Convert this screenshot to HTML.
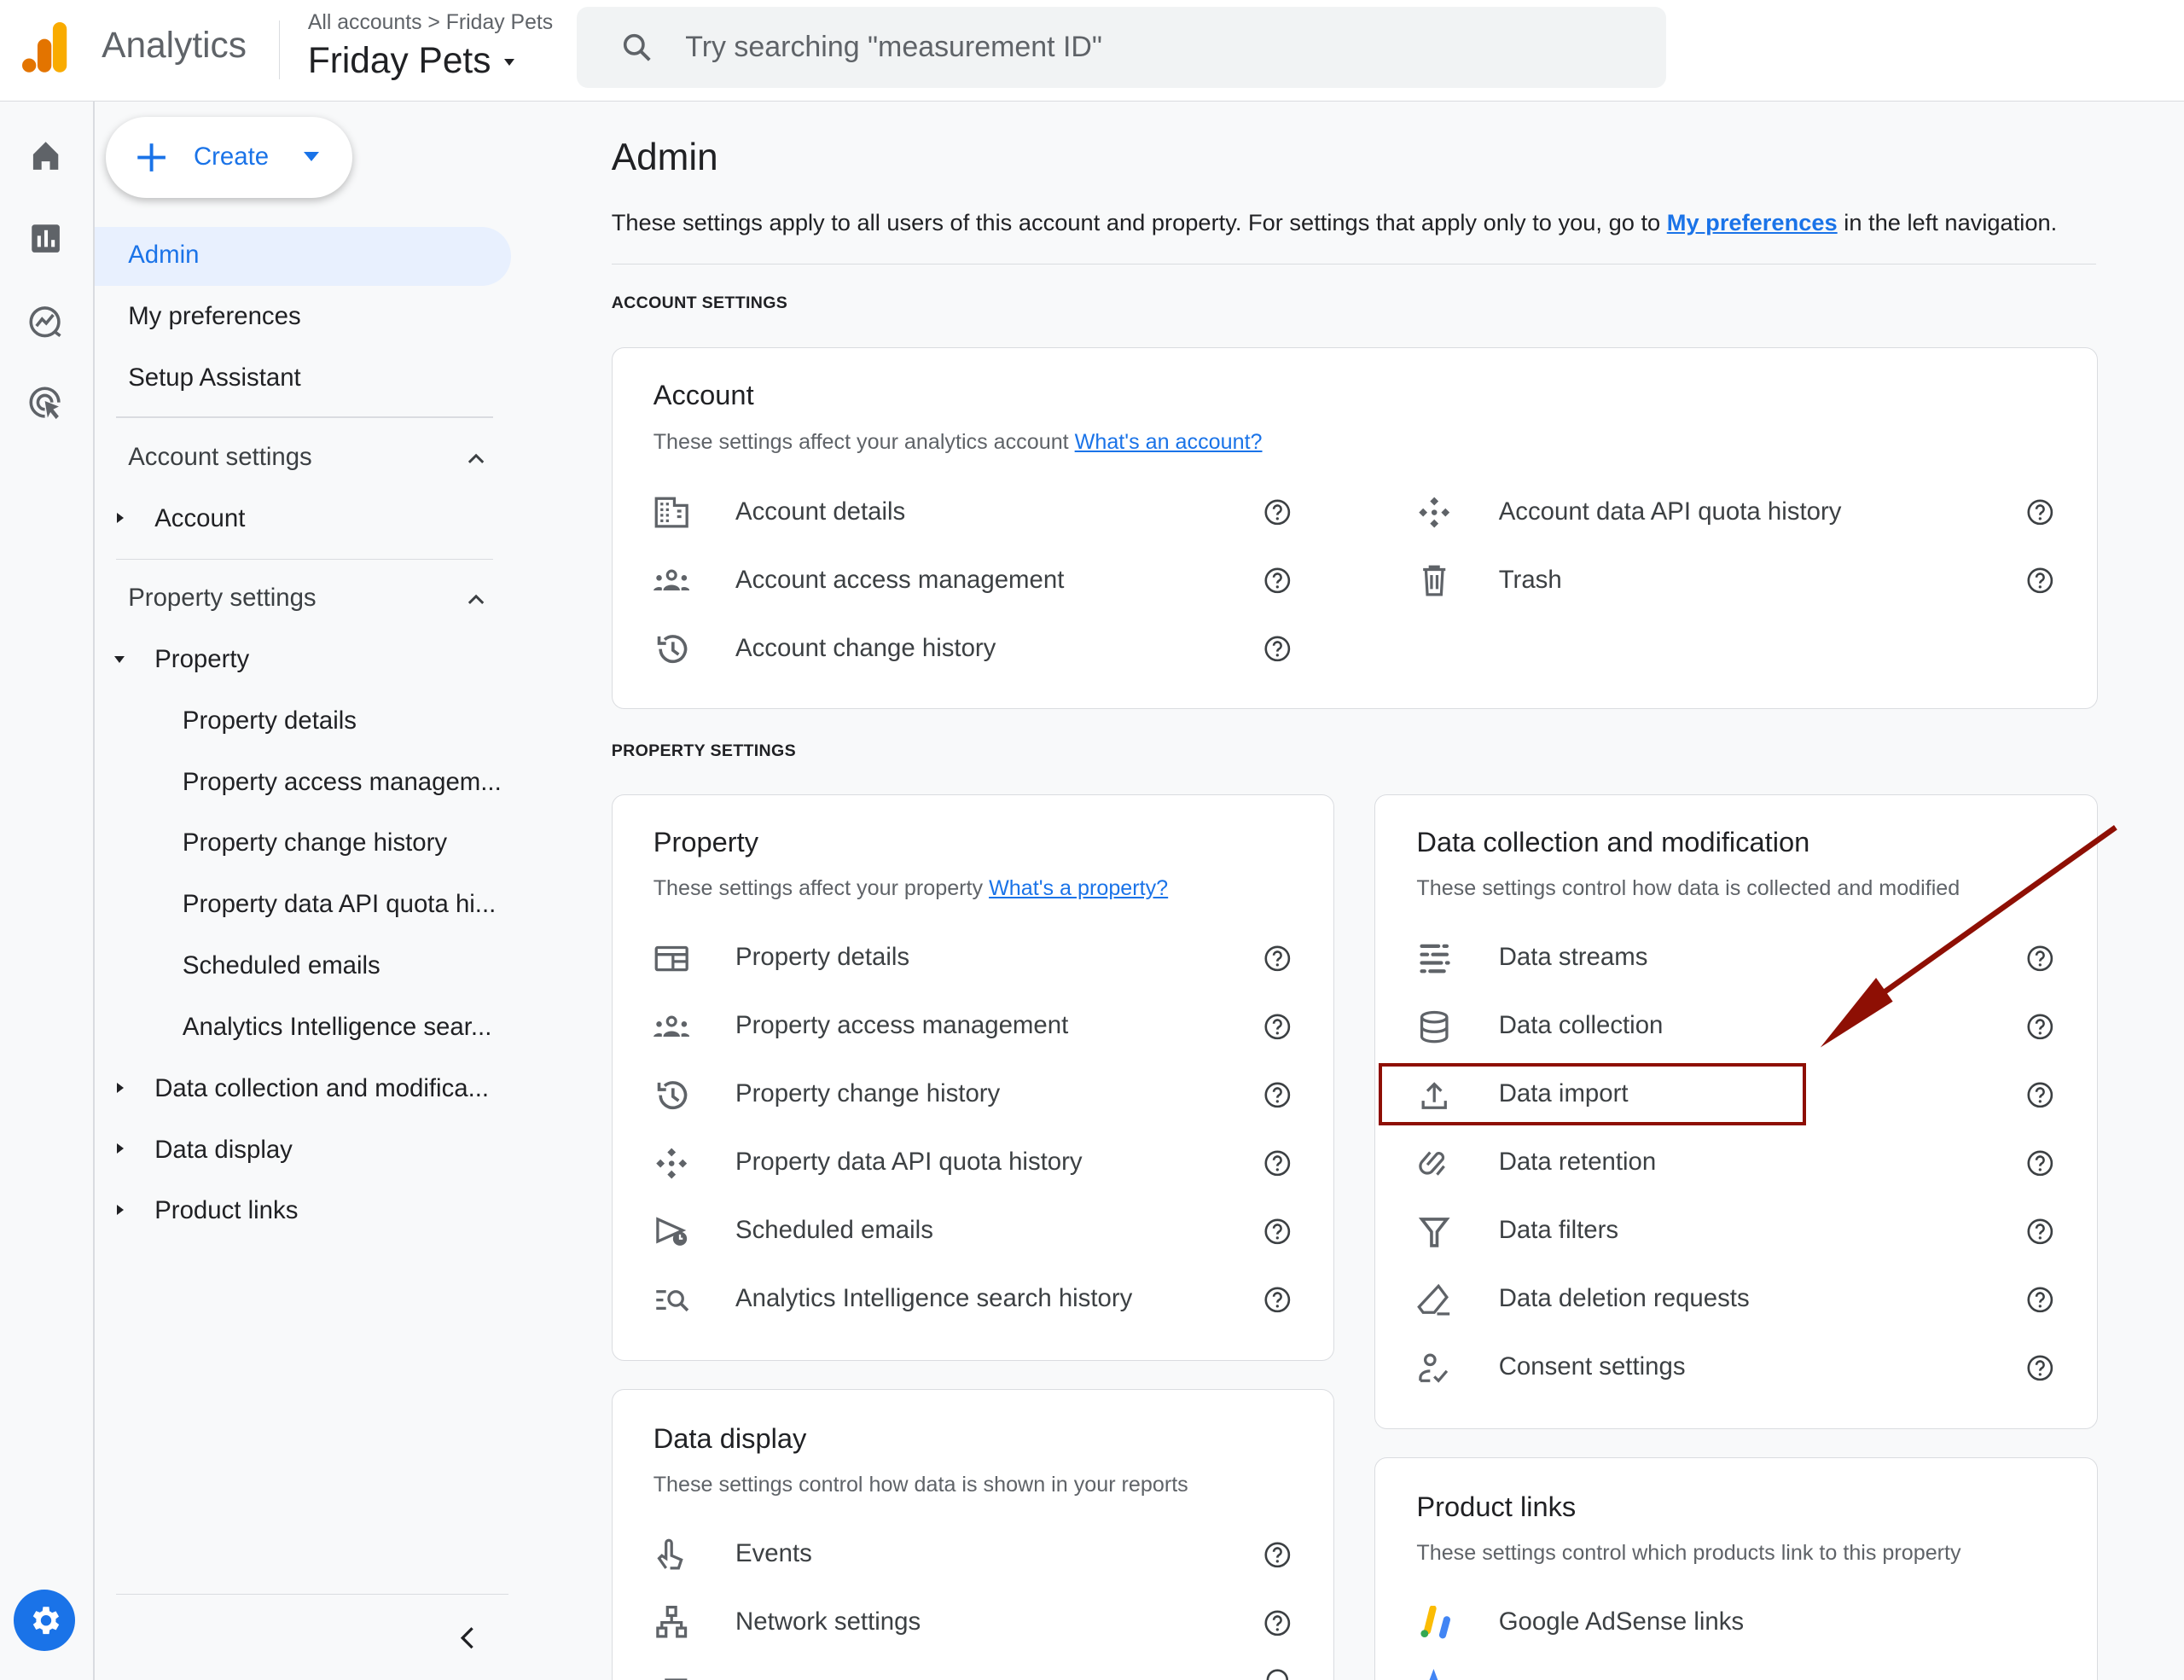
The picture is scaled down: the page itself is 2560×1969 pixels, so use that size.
<!DOCTYPE html>
<html><head><meta charset="utf-8">
<style>
html,body{margin:0;padding:0;overflow:hidden}
body{zoom:1.63265;background:#f8f9fa;font-family:"Liberation Sans",Arial,sans-serif;color:#202124}
#w{position:relative;width:1568px;height:1206px;overflow:hidden;background:#f8f9fa}
.a{position:absolute}
.top{left:0;top:0;width:1568px;height:72px;background:#fff;border-bottom:1px solid #dadce0}
.card{position:absolute;background:#fff;border:1px solid #dadce0;border-radius:9px}
.ct{position:absolute;font-size:20px;color:#202124}
.cs{position:absolute;font-size:15.4px;color:#5f6368;white-space:nowrap}
.cs a{color:#1a73e8;text-decoration:underline}
.r{position:absolute;height:26px;width:460px}
.r svg.i{position:absolute;left:0;top:1px;width:26px;height:24px}
.r span{position:absolute;left:59px;top:2px;font-size:18px;color:#3c4043;white-space:nowrap}
.r svg.h{position:absolute;left:438px;top:3px;width:20px;height:20px}
.nav{position:absolute;font-size:18px;color:#202124;white-space:nowrap}
.sec{position:absolute;font-size:12px;font-weight:bold;color:#202124;letter-spacing:.2px}
.hr{position:absolute;height:1px;background:#dadce0}
.car{position:absolute;width:0;height:0;border-top:4px solid transparent;border-bottom:4px solid transparent;border-left:5px solid #202124}
.card2{position:absolute;width:0;height:0;border-left:4px solid transparent;border-right:4px solid transparent;border-top:5px solid #202124}
</style></head><body><div id="w">
<svg width="0" height="0" style="position:absolute">
<defs>
<g id="help"><circle cx="10" cy="10" r="8.3" fill="none" stroke="#3c4043" stroke-width="1.6"/><path d="M7.4 7.8a2.6 2.6 0 1 1 3.8 2.3c-.8.5-1.2.9-1.2 1.9" fill="none" stroke="#3c4043" stroke-width="1.6"/><circle cx="10" cy="14.6" r="1" fill="#3c4043"/></g>
</defs></svg>

<div class="a top"></div>
<svg class="a" style="left:16px;top:16px" width="34" height="36" viewBox="0 0 34 36"><rect x="22" y="0" width="10" height="36" rx="5" fill="#f9ab00"/><rect x="11" y="12" width="10" height="24" rx="5" fill="#e37400"/><circle cx="5" cy="31" r="5" fill="#e37400"/></svg>
<div class="a" style="left:73px;top:18px;font-size:26px;color:#5f6368">Analytics</div>
<div class="a" style="left:200px;top:15px;width:1px;height:42px;background:#dadce0"></div>
<div class="a" style="left:221px;top:8px;font-size:15.2px;color:#5f6368;white-space:nowrap">All accounts &gt; Friday Pets</div>
<div class="a" style="left:221px;top:29px;font-size:26px;color:#202124">Friday Pets</div>
<div class="card2" style="left:362px;top:42px"></div>
<div class="a" style="left:414px;top:5px;width:782px;height:58px;background:#f1f3f4;border-radius:8px"></div>
<svg class="a" style="left:445px;top:22px" width="24" height="24" viewBox="0 0 24 24"><circle cx="10" cy="10" r="6.5" fill="none" stroke="#5f6368" stroke-width="2.2"/><path d="M15 15l6 6" stroke="#5f6368" stroke-width="2.4"/></svg>
<div class="a" style="left:492px;top:22px;font-size:20.8px;color:#5f6368;white-space:nowrap">Try searching "measurement ID"</div>

<div class="a" style="left:67px;top:73px;width:1px;height:1133px;background:#dadce0"></div>
<svg class="a" style="left:21px;top:100px" width="24" height="24" viewBox="0 0 24 24"><path d="M3 11L12 2l9 9v11h-6v-6H9v6H3z" fill="#5f6368"/></svg>
<svg class="a" style="left:21px;top:159px" width="24" height="24" viewBox="0 0 24 24"><rect x="2" y="2" width="20" height="20" rx="2" fill="#5f6368"/><rect x="6" y="10" width="2.5" height="8" fill="#fff"/><rect x="11" y="6" width="2.5" height="12" fill="#fff"/><rect x="16" y="13" width="2.5" height="5" fill="#fff"/></svg>
<svg class="a" style="left:20px;top:218px" width="26" height="26" viewBox="0 0 26 26"><circle cx="12" cy="13" r="10" fill="none" stroke="#5f6368" stroke-width="2.2"/><path d="M6 16l4-5 3 3 5-6" fill="none" stroke="#5f6368" stroke-width="2.2"/><path d="M19 20l4 3" stroke="#5f6368" stroke-width="2.2"/></svg>
<svg class="a" style="left:20px;top:277px" width="26" height="26" viewBox="0 0 26 26"><path d="M12 22a10 10 0 1 1 10-10" fill="none" stroke="#5f6368" stroke-width="2.2"/><path d="M12 17a5 5 0 1 1 5-5" fill="none" stroke="#5f6368" stroke-width="2.2"/><path d="M12 11l10 4-4 2 4 5-2 2-4-5-2 4z" fill="#5f6368"/></svg>
<div class="a" style="left:10px;top:1141px;width:44px;height:44px;border-radius:50%;background:#1a73e8"></div>
<svg class="a" style="left:19px;top:1150px" width="26" height="26" viewBox="0 0 24 24"><path fill="#fff" d="M19.4 13a7.5 7.5 0 0 0 0-2l2.1-1.6-2-3.5-2.5 1a7 7 0 0 0-1.7-1L15 3h-4l-.4 2.7a7 7 0 0 0-1.7 1l-2.5-1-2 3.5L6.5 11a7.5 7.5 0 0 0 0 2l-2.1 1.6 2 3.5 2.5-1a7 7 0 0 0 1.7 1L11 21h4l.4-2.7a7 7 0 0 0 1.7-1l2.5 1 2-3.5zM13 15.5A3.5 3.5 0 1 1 13 8.5a3.5 3.5 0 0 1 0 7z"/></svg>

<div class="a" style="left:76px;top:84px;width:177px;height:58px;background:#fff;border-radius:29px;box-shadow:0 2px 6px rgba(0,0,0,.25)"></div>
<svg class="a" style="left:97px;top:101px" width="24" height="24" viewBox="0 0 24 24"><path d="M12 2v20M2 12h20" stroke="#1a73e8" stroke-width="2.4"/></svg>
<div class="a" style="left:139px;top:102px;font-size:18px;color:#1a73e8">Create</div>
<div class="card2" style="left:218px;top:109px;border-left-width:6px;border-right-width:6px;border-top:7px solid #1a73e8"></div>
<div class="a" style="left:68px;top:163px;width:299px;height:42px;background:#e8f0fe;border-radius:0 21px 21px 0"></div>
<div class="nav" style="left:92px;top:173px;color:#1a73e8">Admin</div>
<div class="nav" style="left:92px;top:217px">My preferences</div>
<div class="nav" style="left:92px;top:261px">Setup Assistant</div>
<div class="hr" style="left:83px;top:299px;width:271px"></div>
<div class="nav" style="left:92px;top:318px;color:#3c4043">Account settings</div>
<svg class="a" style="left:334px;top:321px" width="16" height="16" viewBox="0 0 16 16"><path d="M3 11l5-5 5 5" fill="none" stroke="#3c4043" stroke-width="1.8"/></svg>
<div class="car" style="left:84px;top:368px"></div>
<div class="nav" style="left:111px;top:362px">Account</div>
<div class="hr" style="left:83px;top:401px;width:271px"></div>
<div class="nav" style="left:92px;top:419px;color:#3c4043">Property settings</div>
<svg class="a" style="left:334px;top:422px" width="16" height="16" viewBox="0 0 16 16"><path d="M3 11l5-5 5 5" fill="none" stroke="#3c4043" stroke-width="1.8"/></svg>
<div class="card2" style="left:82px;top:471px"></div>
<div class="nav" style="left:111px;top:463px">Property</div>
<div class="nav" style="left:131px;top:507px">Property details</div>
<div class="nav" style="left:131px;top:551px">Property access managem...</div>
<div class="nav" style="left:131px;top:595px">Property change history</div>
<div class="nav" style="left:131px;top:639px">Property data API quota hi...</div>
<div class="nav" style="left:131px;top:683px">Scheduled emails</div>
<div class="nav" style="left:131px;top:727px">Analytics Intelligence sear...</div>
<div class="car" style="left:84px;top:777px"></div>
<div class="nav" style="left:111px;top:771px">Data collection and modifica...</div>
<div class="car" style="left:84px;top:821px"></div>
<div class="nav" style="left:111px;top:815px">Data display</div>
<div class="car" style="left:84px;top:865px"></div>
<div class="nav" style="left:111px;top:859px">Product links</div>
<div class="hr" style="left:83px;top:1144px;width:282px"></div>
<svg class="a" style="left:327px;top:1167px" width="18" height="18" viewBox="0 0 18 18"><path d="M12 2L5 9l7 7" fill="none" stroke="#202124" stroke-width="2"/></svg>

<div class="a" style="left:439px;top:98px;font-size:27px">Admin</div>
<div class="a" style="left:439px;top:150px;font-size:16.7px;white-space:nowrap">These settings apply to all users of this account and property. For settings that apply only to you, go to <a style="color:#1a73e8;font-weight:bold;text-decoration:underline">My preferences</a> in the left navigation.</div>
<div class="hr" style="left:439px;top:189px;width:1066px"></div>
<div class="sec" style="left:439px;top:211px">ACCOUNT SETTINGS</div>

<div class="card" style="left:439px;top:249px;width:1066px;height:259px"></div>
<div class="ct" style="left:469px;top:272px">Account</div>
<div class="cs" style="left:469px;top:309px">These settings affect your analytics account <a>What's an account?</a></div>

<div class="r" style="left:469px;top:355px"><svg class="i" viewBox="0 0 26 24"><path d="M2 2h13v5h9v15H2z" fill="none" stroke="#5f6368" stroke-width="2"/><path d="M5 6h2M9 6h2M5 10h2M9 10h2M5 14h2M9 14h2M5 18h2M9 18h2M17 11h3M17 15h3" stroke="#5f6368" stroke-width="2"/></svg><span>Account details</span><svg class="h"><use href="#help"/></svg></div>
<div class="r" style="left:469px;top:404px"><svg class="i" viewBox="0 0 26 24"><circle cx="13" cy="8" r="3" fill="none" stroke="#5f6368" stroke-width="2"/><circle cx="4" cy="10" r="2" fill="#5f6368"/><circle cx="22" cy="10" r="2" fill="#5f6368"/><path d="M7 19a6 4 0 0 1 12 0z" fill="#5f6368"/><path d="M0 19a4 3 0 0 1 6-2v2zM26 19a4 3 0 0 0-6-2v2z" fill="#5f6368"/></svg><span>Account access management</span><svg class="h"><use href="#help"/></svg></div>
<div class="r" style="left:469px;top:453px"><svg class="i" viewBox="0 0 26 24"><path d="M5 12a9 9 0 1 0 3-6.7" fill="none" stroke="#5f6368" stroke-width="2.2"/><path d="M4 3v5h5" fill="none" stroke="#5f6368" stroke-width="2.2"/><path d="M14 7v6l4 3" fill="none" stroke="#5f6368" stroke-width="2.2"/></svg><span>Account change history</span><svg class="h"><use href="#help"/></svg></div>
<div class="r" style="left:1017px;top:355px"><svg class="i" viewBox="0 0 26 24"><path d="M13 1l3 3-3 3-3-3zM13 17l3 3-3 3-3-3zM5 9l3 3-3 3-3-3zM21 9l3 3-3 3-3-3z" fill="#5f6368"/><circle cx="13" cy="12" r="2" fill="#5f6368"/></svg><span>Account data API quota history</span><svg class="h"><use href="#help"/></svg></div>
<div class="r" style="left:1017px;top:404px"><svg class="i" viewBox="0 0 26 24"><path d="M5 4h16M10 4V2h6v2M7 4l1 18h10l1-18M11 8v10M15 8v10" fill="none" stroke="#5f6368" stroke-width="2"/></svg><span>Trash</span><svg class="h"><use href="#help"/></svg></div>

<div class="sec" style="left:439px;top:532px">PROPERTY SETTINGS</div>

<div class="card" style="left:439px;top:570px;width:518px;height:406px"></div>
<div class="ct" style="left:469px;top:593px">Property</div>
<div class="cs" style="left:469px;top:629px">These settings affect your property <a>What's a property?</a></div>
<div class="r" style="left:469px;top:675px"><svg class="i" viewBox="0 0 26 24"><rect x="2" y="4" width="22" height="16" rx="1" fill="none" stroke="#5f6368" stroke-width="2"/><path d="M2 9h22M14 9v11M14 14h10" stroke="#5f6368" stroke-width="2"/></svg><span>Property details</span><svg class="h"><use href="#help"/></svg></div>
<div class="r" style="left:469px;top:724px"><svg class="i" viewBox="0 0 26 24"><circle cx="13" cy="8" r="3" fill="none" stroke="#5f6368" stroke-width="2"/><circle cx="4" cy="10" r="2" fill="#5f6368"/><circle cx="22" cy="10" r="2" fill="#5f6368"/><path d="M7 19a6 4 0 0 1 12 0z" fill="#5f6368"/><path d="M0 19a4 3 0 0 1 6-2v2zM26 19a4 3 0 0 0-6-2v2z" fill="#5f6368"/></svg><span>Property access management</span><svg class="h"><use href="#help"/></svg></div>
<div class="r" style="left:469px;top:773px"><svg class="i" viewBox="0 0 26 24"><path d="M5 12a9 9 0 1 0 3-6.7" fill="none" stroke="#5f6368" stroke-width="2.2"/><path d="M4 3v5h5" fill="none" stroke="#5f6368" stroke-width="2.2"/><path d="M14 7v6l4 3" fill="none" stroke="#5f6368" stroke-width="2.2"/></svg><span>Property change history</span><svg class="h"><use href="#help"/></svg></div>
<div class="r" style="left:469px;top:822px"><svg class="i" viewBox="0 0 26 24"><path d="M13 1l3 3-3 3-3-3zM13 17l3 3-3 3-3-3zM5 9l3 3-3 3-3-3zM21 9l3 3-3 3-3-3z" fill="#5f6368"/><circle cx="13" cy="12" r="2" fill="#5f6368"/></svg><span>Property data API quota history</span><svg class="h"><use href="#help"/></svg></div>
<div class="r" style="left:469px;top:871px"><svg class="i" viewBox="0 0 26 24"><path d="M3 3l18 8-18 8z" fill="none" stroke="#5f6368" stroke-width="2"/><circle cx="19" cy="17" r="5" fill="#5f6368"/><path d="M19 14v3h2" stroke="#fff" stroke-width="1.4" fill="none"/></svg><span>Scheduled emails</span><svg class="h"><use href="#help"/></svg></div>
<div class="r" style="left:469px;top:920px"><svg class="i" viewBox="0 0 26 24"><path d="M2 6h7M2 12h5M2 18h7" stroke="#5f6368" stroke-width="2"/><circle cx="16" cy="11" r="5" fill="none" stroke="#5f6368" stroke-width="2"/><path d="M19.5 14.5l5 5" stroke="#5f6368" stroke-width="2.2"/></svg><span>Analytics Intelligence search history</span><svg class="h"><use href="#help"/></svg></div>

<div class="card" style="left:987px;top:570px;width:518px;height:455px"></div>
<div class="ct" style="left:1017px;top:593px">Data collection and modification</div>
<div class="cs" style="left:1017px;top:629px">These settings control how data is collected and modified</div>
<div class="r" style="left:1017px;top:675px"><svg class="i" viewBox="0 0 26 24"><path d="M4 3h12M20 3h2M4 9h4M12 9h10M4 15h14M22 15h1M4 21h2M10 21h10" stroke="#5f6368" stroke-width="2.6" stroke-linecap="round"/></svg><span>Data streams</span><svg class="h"><use href="#help"/></svg></div>
<div class="r" style="left:1017px;top:724px"><svg class="i" viewBox="0 0 26 24"><ellipse cx="13" cy="5" rx="9" ry="3.5" fill="none" stroke="#5f6368" stroke-width="2"/><path d="M4 5v14c0 2 4 3.5 9 3.5s9-1.5 9-3.5V5M4 12c0 2 4 3.5 9 3.5s9-1.5 9-3.5" fill="none" stroke="#5f6368" stroke-width="2"/></svg><span>Data collection</span><svg class="h"><use href="#help"/></svg></div>
<div class="r" style="left:1017px;top:773px"><svg class="i" viewBox="0 0 26 24"><path d="M13 17V4M8 9l5-5 5 5M5 16v5h16v-5" fill="none" stroke="#5f6368" stroke-width="2"/></svg><span>Data import</span><svg class="h"><use href="#help"/></svg></div>
<div class="r" style="left:1017px;top:822px"><svg class="i" viewBox="0 0 26 24"><path d="M8 13l7-8a3 3 0 0 1 4 4l-8 9a5 5 0 0 1-7-7l6-7M20 14l-5 6" fill="none" stroke="#5f6368" stroke-width="2"/></svg><span>Data retention</span><svg class="h"><use href="#help"/></svg></div>
<div class="r" style="left:1017px;top:871px"><svg class="i" viewBox="0 0 26 24"><path d="M4 3h18l-7 9v10h-4V12z" fill="none" stroke="#5f6368" stroke-width="2.2"/></svg><span>Data filters</span><svg class="h"><use href="#help"/></svg></div>
<div class="r" style="left:1017px;top:920px"><svg class="i" viewBox="0 0 26 24"><path d="M16 2l6 8-9 11H5l-3-4z" fill="none" stroke="#5f6368" stroke-width="2"/><path d="M15 22h9" stroke="#5f6368" stroke-width="2"/></svg><span>Data deletion requests</span><svg class="h"><use href="#help"/></svg></div>
<div class="r" style="left:1017px;top:969px"><svg class="i" viewBox="0 0 26 24"><circle cx="10" cy="6" r="3.5" fill="none" stroke="#5f6368" stroke-width="2"/><path d="M3 21v-2c0-3 3-5 7-5M3 21h7" fill="none" stroke="#5f6368" stroke-width="2"/><path d="M13 18l3 3 6-7" fill="none" stroke="#5f6368" stroke-width="2"/></svg><span>Consent settings</span><svg class="h"><use href="#help"/></svg></div>

<div class="card" style="left:439px;top:997px;width:518px;height:240px"></div>
<div class="ct" style="left:469px;top:1021px">Data display</div>
<div class="cs" style="left:469px;top:1057px">These settings control how data is shown in your reports</div>
<div class="r" style="left:469px;top:1103px"><svg class="i" viewBox="0 0 26 24"><path d="M12 22h6l2-6-7-3V4a2 2 0 0 0-4 0v11l-3-2-2 2 5 7" fill="none" stroke="#5f6368" stroke-width="2"/></svg><span>Events</span><svg class="h"><use href="#help"/></svg></div>
<div class="r" style="left:469px;top:1152px"><svg class="i" viewBox="0 0 26 24"><rect x="10" y="1" width="6" height="6" fill="none" stroke="#5f6368" stroke-width="2"/><rect x="3" y="16" width="6" height="6" fill="none" stroke="#5f6368" stroke-width="2"/><rect x="17" y="16" width="6" height="6" fill="none" stroke="#5f6368" stroke-width="2"/><path d="M13 7v5M6 16v-4h14v4" fill="none" stroke="#5f6368" stroke-width="2"/></svg><span>Network settings</span><svg class="h"><use href="#help"/></svg></div>
<svg class="a" style="left:475px;top:1198px" width="20" height="8"><path d="M2 8h16" stroke="#5f6368" stroke-width="2"/></svg>
<svg class="a" style="left:907px;top:1198px" width="20" height="8"><path d="M3 8a7 7 0 0 1 14 0" stroke="#3c4043" stroke-width="1.6" fill="none"/></svg>

<div class="card" style="left:987px;top:1046px;width:518px;height:200px"></div>
<div class="ct" style="left:1017px;top:1070px">Product links</div>
<div class="cs" style="left:1017px;top:1106px">These settings control which products link to this property</div>
<div class="r" style="left:1017px;top:1152px"><svg class="i" viewBox="0 0 26 24"><path d="M12 2l-4 16" stroke="#fbbc04" stroke-width="5" stroke-linecap="round"/><path d="M22 10l-3 11" stroke="#4285f4" stroke-width="5" stroke-linecap="round"/><circle cx="6" cy="20" r="2.7" fill="#34a853"/></svg><span>Google AdSense links</span></div>
<svg class="a" style="left:1022px;top:1198px" width="14" height="8"><path d="M4 8L7 0l3 8z" fill="#4285f4"/></svg>

<div class="a" style="left:990px;top:763px;width:302px;height:40px;border:3px solid #8e0f04"></div>
<svg class="a" style="left:1290px;top:585px" width="240" height="180" viewBox="0 0 240 180"><path d="M229 9L45 140" stroke="#8e0f04" stroke-width="4"/><path d="M17 167l40-50 12 17z" fill="#8e0f04"/></svg>
</div></body></html>
